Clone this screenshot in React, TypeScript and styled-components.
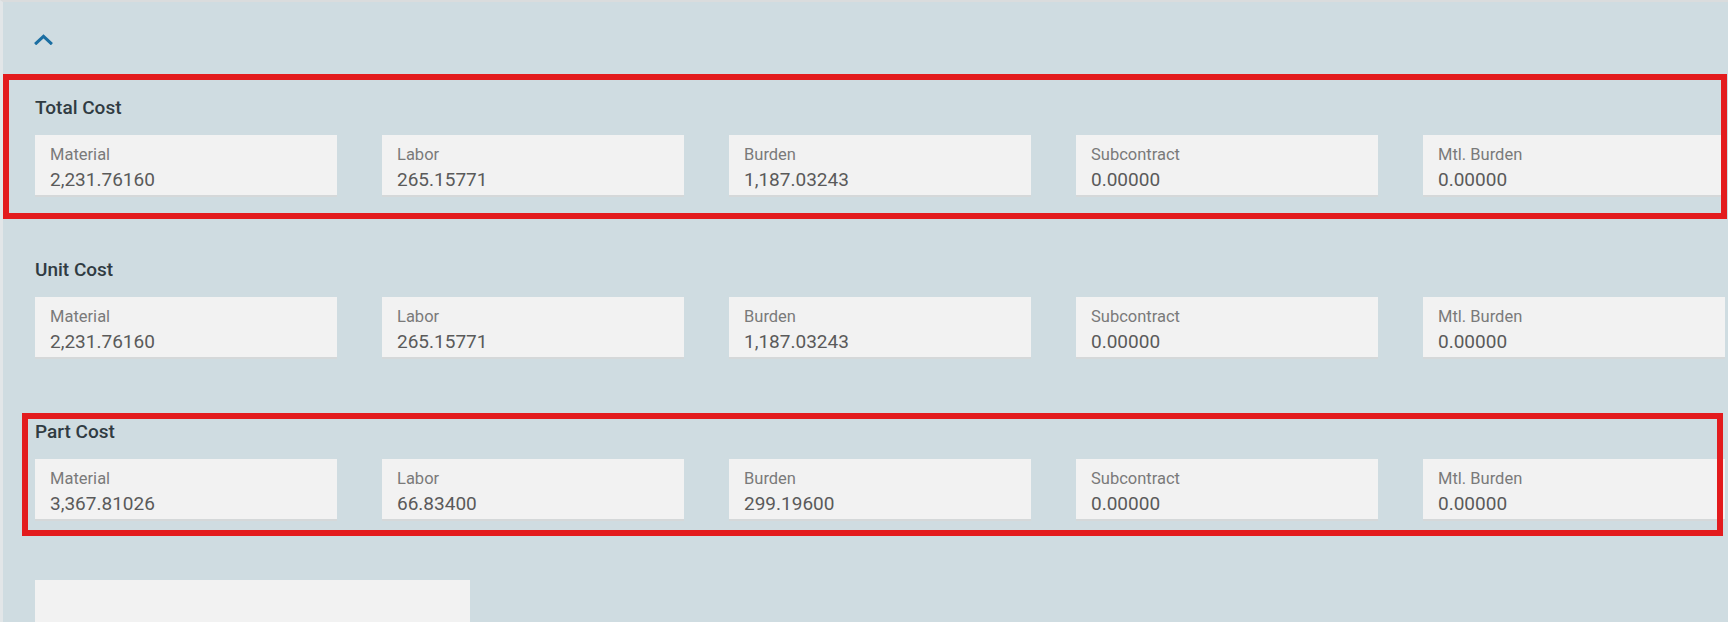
import React from "react";
import styled, { createGlobalStyle } from "styled-components";

const GlobalStyle = createGlobalStyle`
  html, body {
    margin: 0;
    padding: 0;
    overflow: hidden;
  }
  body {
    font-family: Roboto, "Noto Sans", Arial, sans-serif;
  }
`;

const Page = styled.div`
  width: 1728px;
  height: 622px;
  box-sizing: border-box;
  overflow: hidden;
  background: #cfdce1;
  border-top: 2px solid #dadcdd;
  border-left: 3px solid #e2e6e8;
`;

const Header = styled.div`
  height: 95px;
  padding: 31px 0 0 31px;
  box-sizing: border-box;
`;

const CollapseButton = styled.button`
  display: block;
  width: 19px;
  height: 11px;
  padding: 0;
  border: 0;
  background: none;
  cursor: pointer;
  color: #1b6ea2;
`;

const Sections = styled.div`
  display: flex;
  flex-direction: column;
  gap: 62px;
`;

const Section = styled.section`
  position: relative;
  padding-left: 32px;
`;

const Highlight = styled.div<{
  $top: number;
  $right: number;
  $bottom: number;
  $left: number;
}>`
  position: absolute;
  top: ${(p) => p.$top}px;
  right: ${(p) => p.$right}px;
  bottom: ${(p) => p.$bottom}px;
  left: ${(p) => p.$left}px;
  border: 6px solid #e31b1d;
  pointer-events: none;
`;

const SectionTitle = styled.h3`
  margin: 0 0 16px;
  font-size: 19px;
  line-height: 22px;
  font-weight: 500;
  color: #303b42;
`;

const CardRow = styled.div`
  display: grid;
  grid-template-columns: repeat(5, 302px);
  column-gap: 45px;
`;

const Card = styled.div<{ $width?: number; $height?: number }>`
  box-sizing: border-box;
  width: ${(p) => (p.$width ? `${p.$width}px` : "auto")};
  height: ${(p) => p.$height ?? 62}px;
  padding: 10px 15px 0;
  background: #f2f2f2;
  border-bottom: 2px solid #d5d8d9;
`;

const FieldLabel = styled.div`
  font-size: 16.5px;
  line-height: 20px;
  color: #7a7a7a;
`;

const FieldValue = styled.div`
  margin-top: 3px;
  font-size: 19px;
  line-height: 24px;
  color: #5a5a5a;
`;

const Footer = styled.div`
  margin-top: 59px;
  padding-left: 32px;
`;

type Field = { label: string; value: string };

type CostGroup = {
  title: string;
  fields: Field[];
  highlight?: { top: number; right: number; bottom: number; left: number };
};

const groups: CostGroup[] = [
  {
    title: "Total Cost",
    fields: [
      { label: "Material", value: "2,231.76160" },
      { label: "Labor", value: "265.15771" },
      { label: "Burden", value: "1,187.03243" },
      { label: "Subcontract", value: "0.00000" },
      { label: "Mtl. Burden", value: "0.00000" },
    ],
    highlight: { top: -23, right: 1, bottom: -22, left: 0 },
  },
  {
    title: "Unit Cost",
    fields: [
      { label: "Material", value: "2,231.76160" },
      { label: "Labor", value: "265.15771" },
      { label: "Burden", value: "1,187.03243" },
      { label: "Subcontract", value: "0.00000" },
      { label: "Mtl. Burden", value: "0.00000" },
    ],
  },
  {
    title: "Part Cost",
    fields: [
      { label: "Material", value: "3,367.81026" },
      { label: "Labor", value: "66.83400" },
      { label: "Burden", value: "299.19600" },
      { label: "Subcontract", value: "0.00000" },
      { label: "Mtl. Burden", value: "0.00000" },
    ],
    highlight: { top: -8, right: 5, bottom: -15, left: 19 },
  },
];

const App: React.FC = () => {
  return (
    <>
      <GlobalStyle />
      <Page>
        <Header>
          <CollapseButton aria-label="Collapse">
            <svg width="19" height="11" viewBox="0 0 19 11" fill="none">
              <path
                d="M2.2 9.2 L9.5 2.4 L16.8 9.2"
                stroke="currentColor"
                strokeWidth="3"
                strokeLinecap="square"
              />
            </svg>
          </CollapseButton>
        </Header>
        <Sections>
          {groups.map((group) => (
            <Section key={group.title}>
              <SectionTitle>{group.title}</SectionTitle>
              <CardRow>
                {group.fields.map((field) => (
                  <Card key={field.label}>
                    <FieldLabel>{field.label}</FieldLabel>
                    <FieldValue>{field.value}</FieldValue>
                  </Card>
                ))}
              </CardRow>
              {group.highlight && (
                <Highlight
                  $top={group.highlight.top}
                  $right={group.highlight.right}
                  $bottom={group.highlight.bottom}
                  $left={group.highlight.left}
                />
              )}
            </Section>
          ))}
        </Sections>
        <Footer>
          <Card $width={435} $height={80} />
        </Footer>
      </Page>
    </>
  );
};

export default App;
